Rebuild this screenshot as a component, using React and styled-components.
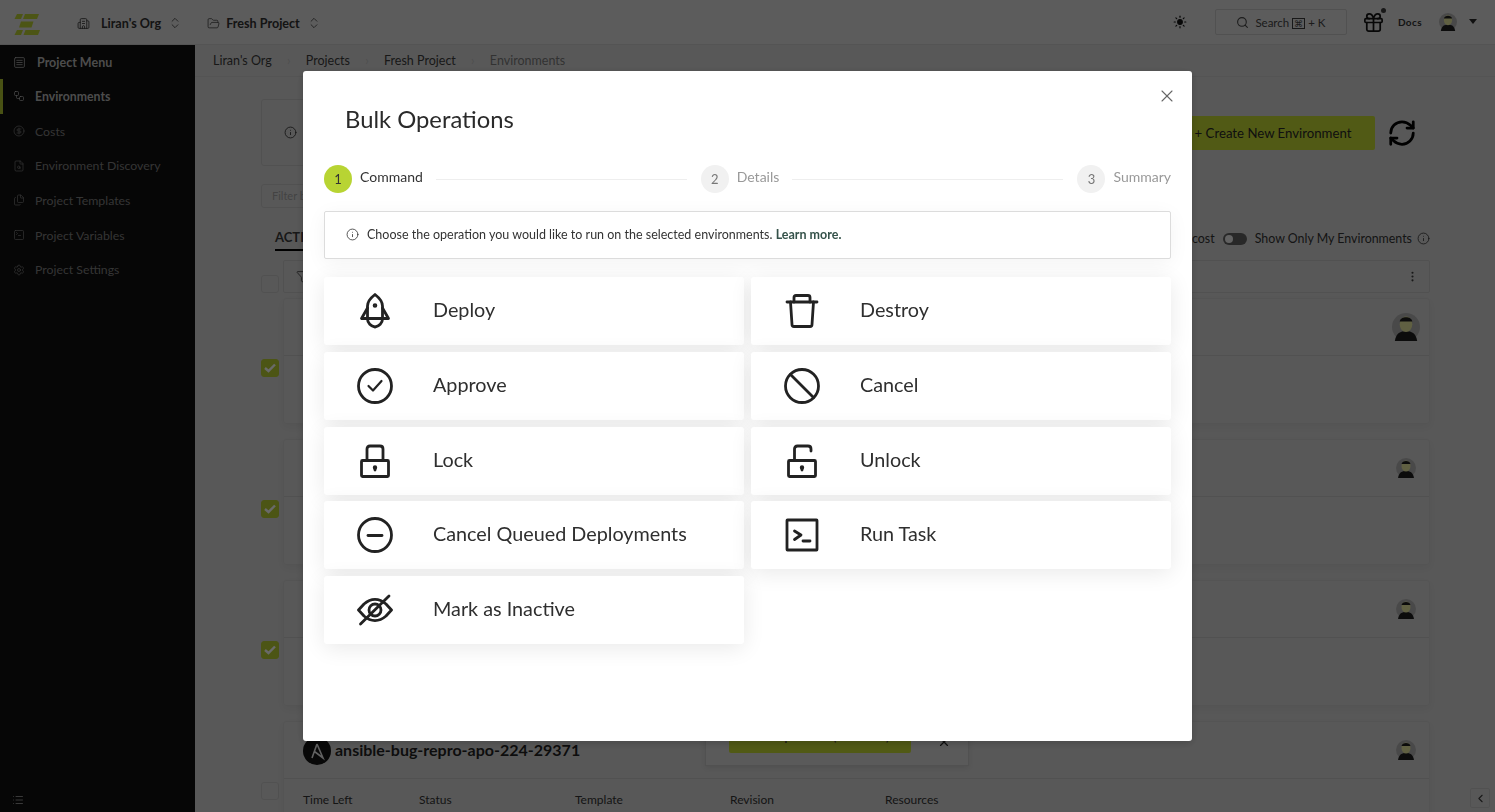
import styled, { createGlobalStyle } from "styled-components";
import {
  Building2,
  ChevronLeft,
  ChevronsUpDown,
  CircleDollarSign,
  EllipsisVertical,
  FileSearch,
  Files,
  Filter,
  FolderOpen,
  Gift,
  Info,
  List,
  RefreshCw,
  Search,
  Settings,
  SquareMenu,
  SquareTerminal,
  Sun,
  Workflow,
  X,
} from "lucide-react";

const GlobalStyle = createGlobalStyle`
  html, body {
    margin: 0;
    height: 100%;
    overflow: hidden;
    background: #b9b9b9;
    font-family: "Lato", "Liberation Sans", sans-serif;
    color: #222;
  }
  * {
    box-sizing: border-box;
  }
`;

const Page = styled.div`
  display: flex;
  flex-direction: column;
  height: 100vh;
  overflow: hidden;
`;

const Header = styled.header`
  display: flex;
  align-items: center;
  flex: 0 0 45px;
  padding: 0 18px 0 14px;
  background: #c0c0c0;
  border-bottom: 1px solid #b0b0b0;
`;

const Logo = styled.svg`
  width: 26px;
  height: 21px;
  margin: 4px 37px 0 0;
`;

const Switcher = styled.div`
  display: flex;
  align-items: center;
  margin: 2px ${(props) => props.$after}px 0 0;
  font-size: 12.6px;
  font-weight: 700;
  color: #2a2a2a;

  > span {
    margin: 0 7px 0 ${(props) => props.$gap}px;
  }
`;

const HeaderRight = styled.div`
  display: flex;
  align-items: center;
  margin-left: auto;
`;

const SearchBox = styled.div`
  display: flex;
  align-items: center;
  justify-content: center;
  gap: 6px;
  width: 132px;
  height: 26px;
  margin: 0 15px 0 28px;
  border: 1px solid #aaa;
  border-radius: 2px;
  font-size: 11.5px;
  color: #3a3a3a;
`;

const KeyCap = styled.span`
  display: inline-block;
  padding: 0 1px;
  margin-right: 3px;
  border: 1px solid #333;
  font-size: 9px;
  line-height: 9px;
`;

const GiftWrap = styled.div`
  position: relative;
  display: flex;
`;

const GiftDot = styled.i`
  position: absolute;
  top: -3px;
  right: -1px;
  width: 5px;
  height: 5px;
  border-radius: 50%;
  background: #333;
`;

const DocsLink = styled.span`
  margin: 0 17px 0 13px;
  font-size: 10px;
  font-weight: 700;
  letter-spacing: 0.4px;
  color: #2a2a2a;
`;

const Caret = styled.i`
  width: 0;
  height: 0;
  margin-left: 12px;
  margin-top: -2px;
  border: 4px solid transparent;
  border-top: 5px solid #222;
  border-bottom: 0;
`;

const Body = styled.div`
  display: flex;
  flex: 1;
  min-height: 0;
`;

const Sidebar = styled.aside`
  display: flex;
  flex-direction: column;
  flex: 0 0 195px;
  background: #0d0d0d;
`;

const SideTitle = styled.div`
  display: flex;
  align-items: center;
  gap: 11px;
  height: 34px;
  padding-left: 13px;
  font-size: 12.5px;
  font-weight: 700;
  color: #a0a0a0;
`;

const SideItem = styled.div`
  display: flex;
  align-items: center;
  gap: 10px;
  height: 34.7px;
  padding-left: ${(props) => (props.$active ? 10 : 13)}px;
  border-left: ${(props) => (props.$active ? "3px solid #98ac2a" : "0")};
  font-size: 12.3px;
  font-weight: ${(props) => (props.$active ? 700 : 400)};
  color: ${(props) => (props.$active ? "#a0a0a0" : "#6f6f6f")};

  &:first-of-type {
    margin-top: 1.5px;
  }
`;

const SideFoot = styled.div`
  margin-top: auto;
  padding: 0 0 3px 12px;
  color: #777;
`;

const Main = styled.main`
  flex: 1;
  min-width: 0;
  overflow: hidden;
`;

const Crumbs = styled.nav`
  display: flex;
  align-items: center;
  height: 32px;
  padding-left: 18px;
  border-bottom: 1px solid #b0b0b0;
  font-size: 12.5px;
  color: #333;
`;

const Sep = styled.span`
  width: 34px;
  text-align: center;
  color: #a5a5a5;
`;

const CrumbLast = styled.span`
  color: #6a6a6a;
`;

const Content = styled.div`
  padding: 22px 65px 0 66px;
`;

const TopRow = styled.div`
  display: flex;
  align-items: center;
`;

const InfoBox = styled.div`
  display: flex;
  align-items: center;
  flex: 1;
  height: 67px;
  padding-left: 22px;
  border: 1px solid #aaa;
  border-radius: 3px;
  color: #222;
`;

const CreateButton = styled.button`
  width: 204px;
  height: 34px;
  margin-left: 20px;
  padding: 0;
  border: 0;
  border-radius: 2px;
  background: #aabd2c;
  font: inherit;
  font-size: 13.2px;
  color: #222;
`;

const RefreshSlot = styled.div`
  display: flex;
  margin: 0 13px 0 12px;
  color: #000;
`;

const FilterInput = styled.div`
  width: 400px;
  height: 24px;
  margin-top: 18px;
  padding: 4px 10px;
  border: 1px solid #aaa;
  border-radius: 3px;
  font-size: 11px;
  color: #8c8c8c;
`;

const TabsRow = styled.div`
  display: flex;
  align-items: center;
  justify-content: space-between;
  height: 42px;
  margin-bottom: 10px;
  padding-top: 19px;
  font-size: 12.4px;
  color: #2c2c2c;
`;

const ActiveTab = styled.div`
  height: 24px;
  margin-left: 14px;
  border-bottom: 2px solid #000;
  font-size: 13px;
  font-weight: 700;
  line-height: 21px;
  color: #333;
`;

const TabOptions = styled.div`
  display: flex;
  align-items: center;
  gap: 8px;

  > svg {
    margin-left: -3px;
  }
`;

const Toggle = styled.span`
  position: relative;
  width: 24px;
  height: 12px;
  border-radius: 7px;
  background: #555;

  &::after {
    content: "";
    position: absolute;
    top: 2px;
    left: 2px;
    width: 8px;
    height: 8px;
    border-radius: 50%;
    background: #ccc;
  }
`;

const TableRow = styled.div`
  display: grid;
  grid-template-columns: 18px 1fr;
  column-gap: 4px;
  margin-bottom: ${(props) => props.$gap}px;
`;

const Check = styled.span`
  display: flex;
  align-items: center;
  justify-content: center;
  width: 18px;
  height: 18px;
  margin-top: ${(props) => props.$top}px;
  border: 1px solid ${(props) => (props.$on ? "#a0b22c" : "#aaa")};
  border-radius: 3px;
  background: ${(props) => (props.$on ? "#a0b22c" : "transparent")};
  color: #ddd;
`;

const Toolbar = styled.div`
  display: flex;
  align-items: center;
  justify-content: space-between;
  height: 33px;
  padding: 0 10px 0 12px;
  border: 1px solid #aaa;
  border-radius: 2px;
  color: #333;
`;

const EnvCard = styled.section`
  position: relative;
  height: 126px;
  border: 1px solid #b0b0b0;
  border-radius: 3px;
  box-shadow: 0 3px 8px rgba(0, 0, 0, 0.06);
`;

const EnvHead = styled.div`
  display: flex;
  align-items: center;
  justify-content: space-between;
  height: 57px;
  padding: 0 ${(props) => props.$pad}px 0 19px;
  border-bottom: 1px solid #aaa;
`;

const EnvName = styled.div`
  display: flex;
  align-items: center;
  gap: 4px;
  margin-top: -2px;
  font-size: 16px;
  font-weight: 700;
  color: #1c1c1c;
`;

const AnsibleMark = styled.svg`
  width: 28px;
  height: 28px;
  margin-top: 3px;
`;

const EnvLabels = styled.div`
  display: grid;
  grid-template-columns: 116px 156px 155px 155px 155px;
  padding: 13px 0 0 19px;
  font-size: 12px;
  color: #2c2c2c;
`;

const Toast = styled.div`
  position: absolute;
  top: -6px;
  left: 421px;
  display: flex;
  align-items: flex-end;
  width: 264px;
  height: 50px;
  padding: 0 0 12px 23px;
  background: #bdbdbd;
  border: 1px solid #aaa;
  box-shadow: 0 2px 6px rgba(0, 0, 0, 0.1);

  > svg {
    align-self: flex-start;
    margin: 18px 0 0 26px;
  }
`;

const ToastButton = styled.div`
  display: flex;
  align-items: center;
  justify-content: center;
  width: 182px;
  height: 33px;
  background: #aabd2c;
  border-radius: 2px;
  font-size: 11px;
  font-weight: 700;
  color: #333;
`;

const CollapseTab = styled.div`
  position: fixed;
  right: 5px;
  bottom: 4px;
  display: flex;
  align-items: center;
  justify-content: center;
  width: 20px;
  height: 20px;
  border: 1px solid #aaa;
  border-radius: 2px;
  color: #333;
`;

const Overlay = styled.div`
  position: fixed;
  inset: 0;
  display: flex;
  justify-content: center;
  padding-top: 71px;
  background: rgba(0, 0, 0, 0.52);
`;

const Modal = styled.div`
  position: relative;
  width: 889px;
  height: 670px;
  padding: 33px 21px 0;
  background: #fff;
  border-radius: 3px;
  box-shadow: 0 2px 8px rgba(0, 0, 0, 0.2);
`;

const CloseButton = styled.button`
  position: absolute;
  top: 15px;
  right: 15px;
  display: flex;
  padding: 0;
  border: 0;
  background: none;
  color: #666;
`;

const Title = styled.h2`
  margin: 0 0 31px 21px;
  font-size: 23.8px;
  font-weight: 400;
  line-height: 30px;
  color: #2a2a2a;
`;

const Stepper = styled.div`
  display: flex;
  height: 28px;
  margin-bottom: 18px;
`;

const Step = styled.div`
  display: flex;
  align-items: center;
  flex: ${(props) => (props.$last ? "0 0 auto" : "1")};
`;

const StepCircle = styled.span`
  display: flex;
  align-items: center;
  justify-content: center;
  flex: 0 0 28px;
  height: 28px;
  border-radius: 50%;
  background: ${(props) => (props.$on ? "#b8d433" : "#f1f1f1")};
  font-size: 13px;
  color: ${(props) => (props.$on ? "#333" : "#777")};
`;

const StepLabel = styled.span`
  margin: -5px 0 0 8px;
  font-size: 14px;
  color: ${(props) => (props.$on ? "#333" : "#999")};
`;

const StepLine = styled.span`
  flex: 1;
  height: 1px;
  margin: 0 14px 0 13px;
  background: #eee;
`;

const Alert = styled.div`
  display: flex;
  align-items: center;
  gap: 8px;
  height: 48px;
  margin-bottom: 18px;
  padding: 0 0 2px 21px;
  border: 1px solid #dcdcdc;
  border-radius: 2px;
  background: #fff;
  box-shadow: 0 4px 20px rgba(0, 0, 0, 0.05);
  font-size: 12.5px;
  color: #333;

  b {
    color: #35524a;
  }
`;

const OptionGrid = styled.div`
  display: grid;
  grid-template-columns: 420px 420px;
  grid-auto-rows: 68px;
  column-gap: 7px;
  row-gap: 6.75px;
`;

const Option = styled.button`
  display: flex;
  align-items: center;
  padding: 0 0 0 33px;
  border: 0;
  border-radius: 3px;
  background: #fff;
  box-shadow: 0 4px 22px rgba(0, 0, 0, 0.09);
  font: inherit;
  font-size: 19.8px;
  color: #2f2f2f;
  text-align: left;

  > svg {
    flex: 0 0 36px;
    margin-right: 40px;
  }

  > span {
    padding-bottom: 4px;
  }
`;

const Glyph = ({ children }) => (
  <svg
    width="36"
    height="36"
    viewBox="0 0 36 36"
    fill="none"
    stroke="#222"
    strokeWidth="2.8"
    strokeLinecap="round"
    strokeLinejoin="round"
  >
    {children}
  </svg>
);

const operations = [
  {
    label: "Deploy",
    icon: (
      <>
        <path d="M18 1.5C13.5 5 10.5 8.5 10.5 13V26C10.5 30 14 33.5 18 34C22 33.5 25.5 30 25.5 26V13C25.5 8.5 22.5 5 18 1.5Z" />
        <path d="M10.5 15L4.5 25.5H31.5L25.5 15" />
        <circle cx="18" cy="12.5" r="0.9" fill="#222" />
      </>
    ),
  },
  {
    label: "Destroy",
    icon: (
      <>
        <path d="M3 9H33" />
        <path d="M10 9V4.5Q10 2.5 12 2.5H24Q26 2.5 26 4.5V9" />
        <path d="M6.5 9L8 31.5Q8 33.5 10 33.5H26Q28 33.5 28 31.5L29.5 9" />
      </>
    ),
  },
  {
    label: "Approve",
    icon: (
      <>
        <circle cx="18" cy="18" r="16.5" />
        <path d="M11.5 18L16 22.5L24.5 13" strokeWidth="2.2" />
      </>
    ),
  },
  {
    label: "Cancel",
    icon: (
      <>
        <circle cx="18" cy="18" r="16.5" />
        <path d="M6.5 6.5L29.5 29.5" />
      </>
    ),
  },
  {
    label: "Lock",
    icon: (
      <>
        <rect x="4.5" y="17.5" width="27" height="16" rx="1" />
        <path d="M10 17.5V6Q10 3 13 3H23Q26 3 26 6V17.5" />
        <path d="M18 24.5V27" />
        <circle cx="18" cy="24.5" r="0.8" fill="#222" />
      </>
    ),
  },
  {
    label: "Unlock",
    icon: (
      <>
        <rect x="4.5" y="17.5" width="27" height="16" rx="1" />
        <path d="M10.5 17.5V6Q10.5 3 13.5 3H24Q27 3 27 6V8" />
        <path d="M18 24.5V27" />
        <circle cx="18" cy="24.5" r="0.8" fill="#222" />
      </>
    ),
  },
  {
    label: "Cancel Queued Deployments",
    icon: (
      <>
        <circle cx="18" cy="18" r="16.5" />
        <path d="M11 18.5H25" />
      </>
    ),
  },
  {
    label: "Run Task",
    icon: (
      <>
        <rect x="3" y="3" width="30" height="30" rx="0.5" />
        <path d="M10.5 14L17 18L10.5 22.5" />
        <path d="M19 24H26" />
      </>
    ),
  },
  {
    label: "Mark as Inactive",
    icon: (
      <>
        <path d="M1.5 18L7 12C14 6 22 6 29 12L34.5 18L29 24C22 30 14 30 7 24Z" />
        <circle cx="18" cy="18" r="6" />
        <path d="M3.5 32L32 4" />
      </>
    ),
  },
];

const sideLinks = [
  { label: "Environments", Icon: Workflow, active: true },
  { label: "Costs", Icon: CircleDollarSign },
  { label: "Environment Discovery", Icon: FileSearch },
  { label: "Project Templates", Icon: Files },
  { label: "Project Variables", Icon: SquareTerminal },
  { label: "Project Settings", Icon: Settings },
];

const columns = ["Time Left", "Status", "Template", "Revision", "Resources"];

const environments = [
  { id: 1, avatar: 28, checked: true, pad: 9, gap: 15 },
  { id: 2, avatar: 20, checked: true, pad: 13, gap: 15 },
  { id: 3, avatar: 20, checked: true, pad: 13, gap: 15 },
  { id: 4, avatar: 20, checked: false, pad: 13, gap: 0, name: "ansible-bug-repro-apo-224-29371", toast: true },
];

function Avatar({ size }) {
  return (
    <svg width={size} height={size} viewBox="0 0 20 20">
      <circle cx="10" cy="10" r="10" fill="#9a9a9a" />
      <path d="M2 20C3 14 6 13 10 13S17 14 18 20Z" fill="#1b1b1b" />
      <ellipse cx="10" cy="8" rx="4.5" ry="5.5" fill="#c9c98a" />
      <path d="M5.5 6C6 2 14 2 14.5 6Z" fill="#1b1b1b" />
    </svg>
  );
}

function CheckMark() {
  return (
    <svg width="12" height="10" viewBox="0 0 12 10" fill="none" stroke="currentColor" strokeWidth="2.4">
      <path d="M1 5L4.5 8L11 1.5" />
    </svg>
  );
}

export default function App() {
  return (
    <>
      <GlobalStyle />
      <Page>
        <Header>
          <Logo viewBox="0 0 26 21">
            <g fill="#a0b22c">
              <path d="M3 0H9L7 5H0.5ZM11 0H25L23 5H9Z" />
              <path d="M7 7.5H19.5L17.5 13.5H5Z" />
              <path d="M3 16H9L7 21H0.5ZM11.5 16H26L24 21H9.5Z" />
            </g>
          </Logo>
          <Switcher $gap={11} $after={25}>
            <Building2 size={13} strokeWidth={1.5} />
            <span>Liran's Org</span>
            <ChevronsUpDown size={14} strokeWidth={1.3} />
          </Switcher>
          <Switcher $gap={6} $after={22}>
            <FolderOpen size={13} strokeWidth={1.3} />
            <span>Fresh Project</span>
            <ChevronsUpDown size={14} strokeWidth={1.3} />
          </Switcher>
          <HeaderRight>
            <Sun size={14} fill="#111" color="#111" />
            <SearchBox>
              <Search size={13} />
              <span>
                Search <KeyCap>⌘</KeyCap>+ K
              </span>
            </SearchBox>
            <GiftWrap>
              <Gift size={23} strokeWidth={1.8} color="#111" />
              <GiftDot />
            </GiftWrap>
            <DocsLink>Docs</DocsLink>
            <Avatar size={18} />
            <Caret />
          </HeaderRight>
        </Header>
        <Body>
          <Sidebar>
            <SideTitle>
              <SquareMenu size={13} strokeWidth={1.4} />
              Project Menu
            </SideTitle>
            {sideLinks.map(({ label, Icon, active }) => (
              <SideItem key={label} $active={active}>
                <Icon size={12} strokeWidth={1.4} />
                {label}
              </SideItem>
            ))}
            <SideFoot>
              <List size={12} />
            </SideFoot>
          </Sidebar>
          <Main>
            <Crumbs>
              Liran's Org
              <Sep>›</Sep>
              Projects
              <Sep>›</Sep>
              Fresh Project
              <Sep>›</Sep>
              <CrumbLast>Environments</CrumbLast>
            </Crumbs>
            <Content>
              <TopRow>
                <InfoBox>
                  <Info size={13} strokeWidth={1.5} />
                </InfoBox>
                <CreateButton>+ Create New Environment</CreateButton>
                <RefreshSlot>
                  <RefreshCw size={30} strokeWidth={2.2} />
                </RefreshSlot>
              </TopRow>
              <FilterInput>Filter by name</FilterInput>
              <TabsRow>
                <ActiveTab>ACTIVE</ActiveTab>
                <TabOptions>
                  <span>Show cost</span>
                  <Toggle />
                  <span>Show Only My Environments</span>
                  <Info size={13} strokeWidth={1.5} />
                </TabOptions>
              </TabsRow>
              <TableRow $gap={5}>
                <Check $top={15} />
                <Toolbar>
                  <Filter size={13} strokeWidth={1.5} />
                  <EllipsisVertical size={13} />
                </Toolbar>
              </TableRow>
              {environments.map((env) => (
                <TableRow key={env.id} $gap={env.gap}>
                  <Check $top={61} $on={env.checked}>
                    {env.checked && <CheckMark />}
                  </Check>
                  <EnvCard>
                    <EnvHead $pad={env.pad}>
                      <EnvName>
                        {env.name && (
                          <>
                            <AnsibleMark viewBox="0 0 28 28">
                              <circle cx="14" cy="14" r="14" fill="#111" />
                              <path d="M14 7L9 21M14 7L20 21L11.5 14.5" fill="none" stroke="#ccc" strokeWidth="1.6" />
                            </AnsibleMark>
                            {env.name}
                          </>
                        )}
                      </EnvName>
                      <Avatar size={env.avatar} />
                    </EnvHead>
                    {env.name && (
                      <EnvLabels>
                        {columns.map((col) => (
                          <span key={col}>{col}</span>
                        ))}
                      </EnvLabels>
                    )}
                    {env.toast && (
                      <Toast>
                        <ToastButton>Bulk Operations (3 selected)</ToastButton>
                        <X size={14} />
                      </Toast>
                    )}
                  </EnvCard>
                </TableRow>
              ))}
            </Content>
          </Main>
        </Body>
        <CollapseTab>
          <ChevronLeft size={13} />
        </CollapseTab>
      </Page>
      <Overlay>
        <Modal>
          <CloseButton aria-label="Close">
            <X size={20} strokeWidth={1.3} />
          </CloseButton>
          <Title>Bulk Operations</Title>
          <Stepper>
            <Step>
              <StepCircle $on>1</StepCircle>
              <StepLabel $on>Command</StepLabel>
              <StepLine />
            </Step>
            <Step>
              <StepCircle>2</StepCircle>
              <StepLabel>Details</StepLabel>
              <StepLine />
            </Step>
            <Step $last>
              <StepCircle>3</StepCircle>
              <StepLabel>Summary</StepLabel>
            </Step>
          </Stepper>
          <Alert>
            <Info size={13} strokeWidth={1.5} />
            <span>
              Choose the operation you would like to run on the selected environments. <b>Learn more.</b>
            </span>
          </Alert>
          <OptionGrid>
            {operations.map((op) => (
              <Option key={op.label}>
                <Glyph>{op.icon}</Glyph>
                <span>{op.label}</span>
              </Option>
            ))}
          </OptionGrid>
        </Modal>
      </Overlay>
    </>
  );
}
